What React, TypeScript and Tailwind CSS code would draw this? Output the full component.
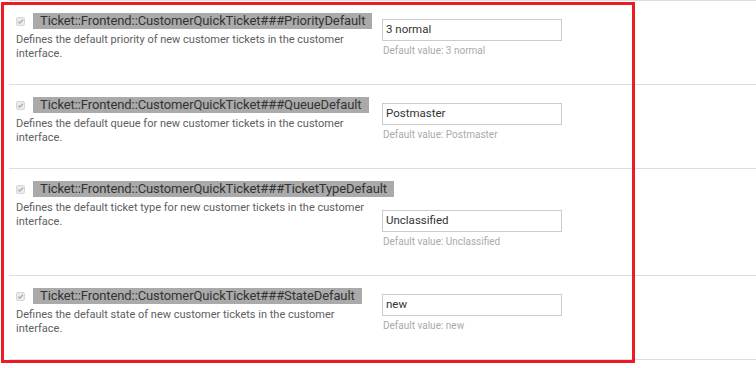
import React from "react";

type Setting = {
  name: string;
  description: string;
  value: string;
  tall?: boolean;
};

const settings: Setting[] = [
  {
    name: "Ticket::Frontend::CustomerQuickTicket###PriorityDefault",
    description: "Defines the default priority of new customer tickets in the customer interface.",
    value: "3 normal"
  },
  {
    name: "Ticket::Frontend::CustomerQuickTicket###QueueDefault",
    description: "Defines the default queue for new customer tickets in the customer interface.",
    value: "Postmaster"
  },
  {
    name: "Ticket::Frontend::CustomerQuickTicket###TicketTypeDefault",
    description: "Defines the default ticket type for new customer tickets in the customer interface.",
    value: "Unclassified",
    tall: true
  },
  {
    name: "Ticket::Frontend::CustomerQuickTicket###StateDefault",
    description: "Defines the default state of new customer tickets in the customer interface.",
    value: "new"
  }
];

const CheckedBox: React.FC = () => (
  <svg width="9" height="9" viewBox="0 0 9 9" className="shrink-0">
    <rect x="0.5" y="0.5" width="8" height="8" rx="1.5" fill="#ececec" stroke="#d6d6d6" />
    <path d="M2.2 4.6 L3.8 6.1 L6.9 2.8" fill="none" stroke="#a8a8a8" strokeWidth="1.3" />
  </svg>
);

const SettingRow: React.FC<{ s: Setting }> = ({ s }) => (
  <div className={["flex border-t border-[#dddddd]", s.tall ? "h-[107px]" : "h-[84px]"].join(" ")}>
    <div className="ml-[7px] w-[366px] shrink-0 pt-[12px]">
      <div className="flex items-center gap-[8px]">
        <CheckedBox />
        <span className="whitespace-nowrap bg-[#aaaaaa] px-[7px] text-[13px] leading-[16px] tracking-[-0.1px] text-[#333333]">
          {s.name}
        </span>
      </div>
      <p className="mt-[4px] w-[352px] text-[11px] leading-[14px] text-[#606060]">{s.description}</p>
    </div>
    <div className={s.tall ? "pt-[41px]" : "pt-[18px]"}>
      <div className="flex h-[22px] w-[180px] items-center border border-[#cccccc] bg-white px-[3px] text-[11.5px] text-[#333333]">
        {s.value}
      </div>
      <div className="mt-[4px] pl-[1px] text-[10px] leading-[12px] text-[#aaaaaa]">
        Default value: {s.value}
      </div>
    </div>
  </div>
);

export default function App() {
  return (
    <div className="relative h-[368px] w-[756px] overflow-hidden bg-white font-['Roboto',sans-serif]">
      <div className="pl-[9px]">
        {settings.map(s => (
          <SettingRow key={s.name} s={s} />
        ))}
        <div className="h-[20px] border-t border-[#dddddd]" />
      </div>
      {/* highlight frame drawn over the list */}
      <div className="pointer-events-none absolute left-[1px] top-[2px] h-[361px] w-[634px] border-[3px] border-[#ed1c24]" />
    </div>
  );
}
